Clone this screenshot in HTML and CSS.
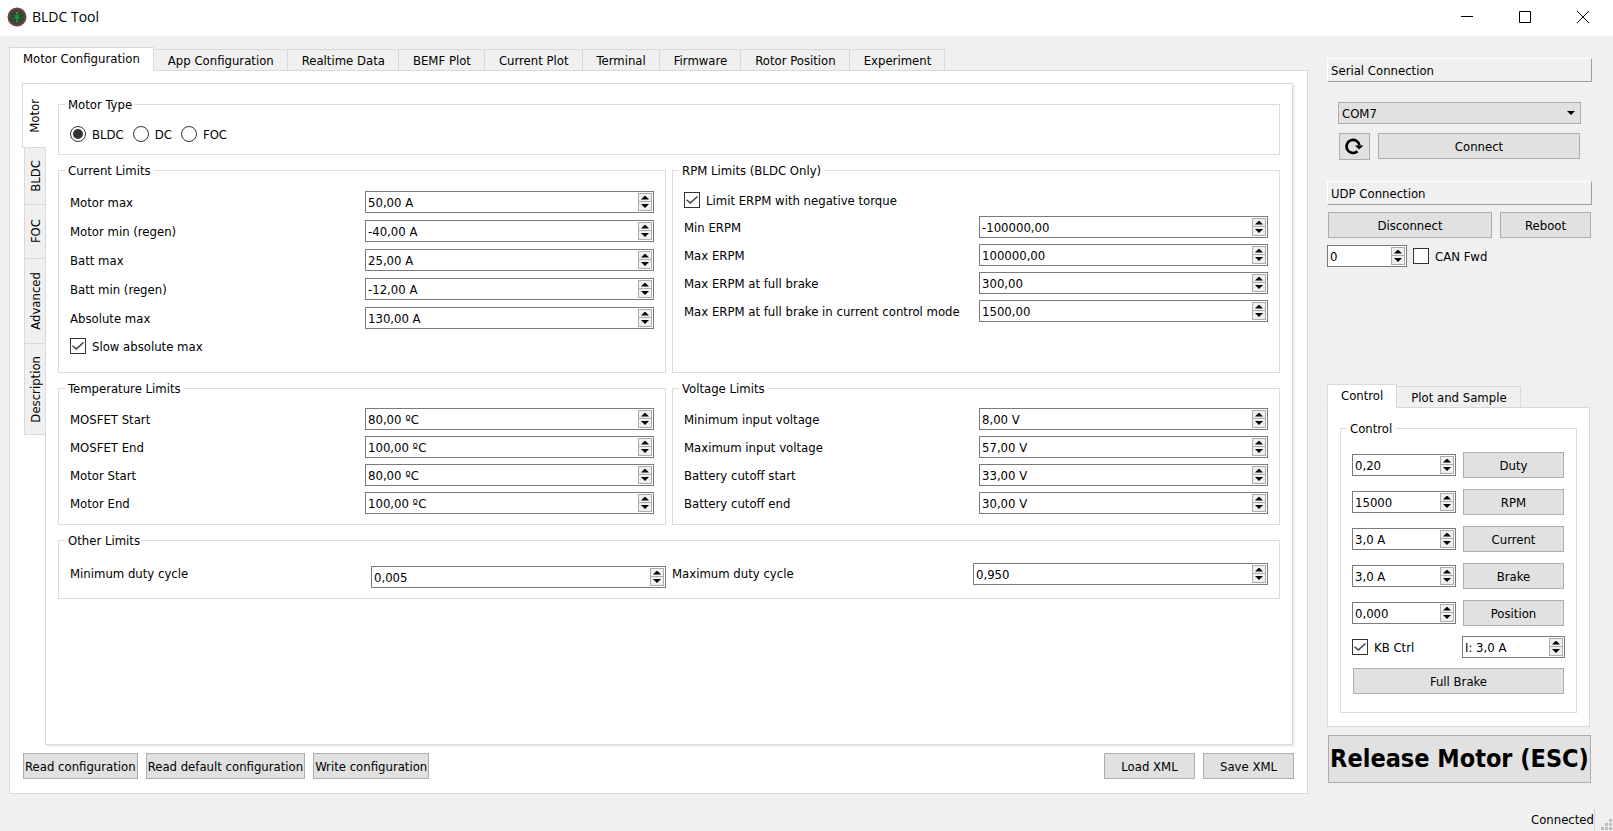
FILE: index.html
```
<!doctype html>
<html lang="en">
<head>
    <meta charset="UTF-8">
    <meta name="viewport" content="width=device-width, initial-scale=1.0">
    <title>BLDC Tool</title>
    <link rel="stylesheet" href="styles.css">
</head>
<body>
    <header class="titlebar">
        <svg class="titlebar__icon" width="20" height="20" viewBox="0 0 20 20">
            <circle cx="10" cy="10" r="8.500" fill="#2b4a30" stroke="#6e4448" stroke-width="2"/>
            <circle cx="10" cy="10" r="6" fill="none" stroke="#3f5f3c" stroke-width="1" stroke-dasharray="2 1"/>
            <path d="M10 5v10M7 8l6 4M13 8l-6 4" stroke="#2f7d3a" stroke-width="1"/>
            <circle cx="10" cy="10" r="2" fill="#1f8f45"/>
            <path d="M10 5v2M10 13v2" stroke="#8a6a2a" stroke-width="2"/>
        </svg>
        <h1 class="titlebar__name">BLDC Tool</h1>
        <div class="titlebar__controls">
            <button class="win-btn" aria-label="Minimize"><svg width="12" height="12" viewBox="0 0 12 12"><path d="M0 5.500h12" stroke="#000"/></svg></button>
            <button class="win-btn" aria-label="Maximize"><svg width="12" height="12" viewBox="0 0 12 12"><path d="M.5.5h11v11H.5z" fill="none" stroke="#000"/></svg></button>
            <button class="win-btn" aria-label="Close"><svg width="12" height="12" viewBox="0 0 12 12"><path d="M0 0l12 12M12 0L0 12" stroke="#000"/></svg></button>
        </div>
    </header>

    <main class="window">
        <section class="main">
            <nav class="tabs">
                <button class="tab active">Motor Configuration</button>
                <button class="tab">App Configuration</button>
                <button class="tab">Realtime Data</button>
                <button class="tab">BEMF Plot</button>
                <button class="tab">Current Plot</button>
                <button class="tab">Terminal</button>
                <button class="tab">Firmware</button>
                <button class="tab">Rotor Position</button>
                <button class="tab">Experiment</button>
            </nav>
            <div class="pane main__pane">
                <div class="config">
                    <nav class="side-tabs">
                        <button class="side-tab side-tab_motor active"><span>Motor</span></button>
                        <button class="side-tab side-tab_bldc"><span>BLDC</span></button>
                        <button class="side-tab side-tab_foc"><span>FOC</span></button>
                        <button class="side-tab side-tab_advanced"><span>Advanced</span></button>
                        <button class="side-tab side-tab_description"><span>Description</span></button>
                    </nav>
                    <form class="config__pane">
                        <fieldset class="group group_type">
                            <legend>Motor Type</legend>
                            <label class="check"><input type="radio" name="type" checked>BLDC</label>
                            <label class="check"><input type="radio" name="type">DC</label>
                            <label class="check"><input type="radio" name="type">FOC</label>
                        </fieldset>
                        <fieldset class="group group_current">
                            <legend>Current Limits</legend>
                            <label for="motor-max">Motor max</label>
                            <div class="spin"><input type="text" id="motor-max" value="50,00 A"><button type="button" class="up" aria-label="Up"></button><button type="button" class="down" aria-label="Down"></button></div>
                            <label for="motor-min">Motor min (regen)</label>
                            <div class="spin"><input type="text" id="motor-min" value="-40,00 A"><button type="button" class="up" aria-label="Up"></button><button type="button" class="down" aria-label="Down"></button></div>
                            <label for="batt-max">Batt max</label>
                            <div class="spin"><input type="text" id="batt-max" value="25,00 A"><button type="button" class="up" aria-label="Up"></button><button type="button" class="down" aria-label="Down"></button></div>
                            <label for="batt-min">Batt min (regen)</label>
                            <div class="spin"><input type="text" id="batt-min" value="-12,00 A"><button type="button" class="up" aria-label="Up"></button><button type="button" class="down" aria-label="Down"></button></div>
                            <label for="abs-max">Absolute max</label>
                            <div class="spin"><input type="text" id="abs-max" value="130,00 A"><button type="button" class="up" aria-label="Up"></button><button type="button" class="down" aria-label="Down"></button></div>
                            <label class="check check_wide"><input type="checkbox" checked>Slow absolute max</label>
                        </fieldset>
                        <fieldset class="group group_rpm">
                            <legend>RPM Limits (BLDC Only)</legend>
                            <label class="check check_wide"><input type="checkbox" checked>Limit ERPM with negative torque</label>
                            <label for="erpm-min">Min ERPM</label>
                            <div class="spin"><input type="text" id="erpm-min" value="-100000,00"><button type="button" class="up" aria-label="Up"></button><button type="button" class="down" aria-label="Down"></button></div>
                            <label for="erpm-max">Max ERPM</label>
                            <div class="spin"><input type="text" id="erpm-max" value="100000,00"><button type="button" class="up" aria-label="Up"></button><button type="button" class="down" aria-label="Down"></button></div>
                            <label for="erpm-fb">Max ERPM at full brake</label>
                            <div class="spin"><input type="text" id="erpm-fb" value="300,00"><button type="button" class="up" aria-label="Up"></button><button type="button" class="down" aria-label="Down"></button></div>
                            <label for="erpm-fbcc">Max ERPM at full brake in current control mode</label>
                            <div class="spin"><input type="text" id="erpm-fbcc" value="1500,00"><button type="button" class="up" aria-label="Up"></button><button type="button" class="down" aria-label="Down"></button></div>
                        </fieldset>
                        <fieldset class="group group_temp">
                            <legend>Temperature Limits</legend>
                            <label for="fet-start">MOSFET Start</label>
                            <div class="spin"><input type="text" id="fet-start" value="80,00 ºC"><button type="button" class="up" aria-label="Up"></button><button type="button" class="down" aria-label="Down"></button></div>
                            <label for="fet-end">MOSFET End</label>
                            <div class="spin"><input type="text" id="fet-end" value="100,00 ºC"><button type="button" class="up" aria-label="Up"></button><button type="button" class="down" aria-label="Down"></button></div>
                            <label for="temp-start">Motor Start</label>
                            <div class="spin"><input type="text" id="temp-start" value="80,00 ºC"><button type="button" class="up" aria-label="Up"></button><button type="button" class="down" aria-label="Down"></button></div>
                            <label for="temp-end">Motor End</label>
                            <div class="spin"><input type="text" id="temp-end" value="100,00 ºC"><button type="button" class="up" aria-label="Up"></button><button type="button" class="down" aria-label="Down"></button></div>
                        </fieldset>
                        <fieldset class="group group_volt">
                            <legend>Voltage Limits</legend>
                            <label for="vin-min">Minimum input voltage</label>
                            <div class="spin"><input type="text" id="vin-min" value="8,00 V"><button type="button" class="up" aria-label="Up"></button><button type="button" class="down" aria-label="Down"></button></div>
                            <label for="vin-max">Maximum input voltage</label>
                            <div class="spin"><input type="text" id="vin-max" value="57,00 V"><button type="button" class="up" aria-label="Up"></button><button type="button" class="down" aria-label="Down"></button></div>
                            <label for="cut-start">Battery cutoff start</label>
                            <div class="spin"><input type="text" id="cut-start" value="33,00 V"><button type="button" class="up" aria-label="Up"></button><button type="button" class="down" aria-label="Down"></button></div>
                            <label for="cut-end">Battery cutoff end</label>
                            <div class="spin"><input type="text" id="cut-end" value="30,00 V"><button type="button" class="up" aria-label="Up"></button><button type="button" class="down" aria-label="Down"></button></div>
                        </fieldset>
                        <fieldset class="group group_other">
                            <legend>Other Limits</legend>
                            <label for="duty-min">Minimum duty cycle</label>
                            <div class="spin spin_low"><input type="text" id="duty-min" value="0,005"><button type="button" class="up" aria-label="Up"></button><button type="button" class="down" aria-label="Down"></button></div>
                            <label for="duty-max">Maximum duty cycle</label>
                            <div class="spin"><input type="text" id="duty-max" value="0,950"><button type="button" class="up" aria-label="Up"></button><button type="button" class="down" aria-label="Down"></button></div>
                        </fieldset>
                    </form>
                </div>
                <div class="actions">
                    <button class="btn">Read configuration</button>
                    <button class="btn">Read default configuration</button>
                    <button class="btn">Write configuration</button>
                    <button class="btn btn_xml btn_first">Load XML</button>
                    <button class="btn btn_xml">Save XML</button>
                </div>
            </div>
        </section>

        <aside class="side">
            <h2 class="side__title">Serial Connection</h2>
            <div class="serial">
                <div class="serial__port">
                    <select aria-label="Port"><option>COM7</option></select>
                </div>
                <div class="serial__row">
                    <button class="btn btn_refresh" aria-label="Refresh">
                        <svg width="20" height="18" viewBox="1 1 20 18">
                            <path d="M13.500 14.200A6.500 6.500 0 1 1 15.500 8.500" fill="none" stroke="#000" stroke-width="2.600"/>
                            <path d="M11 8.500h8.500l-4.500 4z"/>
                        </svg>
                    </button>
                    <button class="btn btn_connect">Connect</button>
                </div>
            </div>
            <h2 class="side__title">UDP Connection</h2>
            <div class="udp">
                <button class="btn btn_disconnect">Disconnect</button>
                <button class="btn btn_reboot">Reboot</button>
            </div>
            <div class="can">
                <div class="spin can__id"><input type="text" aria-label="CAN id" value="0"><button type="button" class="up" aria-label="Up"></button><button type="button" class="down" aria-label="Down"></button></div>
                <label class="check"><input type="checkbox">CAN Fwd</label>
            </div>

            <nav class="tabs side__tabs">
                <button class="tab active">Control</button>
                <button class="tab">Plot and Sample</button>
            </nav>
            <div class="pane side__pane">
                <fieldset class="group control">
                    <legend>Control</legend>
                    <div class="control__rows">
                        <div class="spin"><input type="text" aria-label="Duty" value="0,20"><button type="button" class="up" aria-label="Up"></button><button type="button" class="down" aria-label="Down"></button></div>
                        <button class="btn">Duty</button>
                        <div class="spin"><input type="text" aria-label="RPM" value="15000"><button type="button" class="up" aria-label="Up"></button><button type="button" class="down" aria-label="Down"></button></div>
                        <button class="btn">RPM</button>
                        <div class="spin"><input type="text" aria-label="Current" value="3,0 A"><button type="button" class="up" aria-label="Up"></button><button type="button" class="down" aria-label="Down"></button></div>
                        <button class="btn">Current</button>
                        <div class="spin"><input type="text" aria-label="Brake" value="3,0 A"><button type="button" class="up" aria-label="Up"></button><button type="button" class="down" aria-label="Down"></button></div>
                        <button class="btn">Brake</button>
                        <div class="spin"><input type="text" aria-label="Position" value="0,000"><button type="button" class="up" aria-label="Up"></button><button type="button" class="down" aria-label="Down"></button></div>
                        <button class="btn">Position</button>
                    </div>
                    <div class="control__rows control__rows_kb">
                        <label class="check"><input type="checkbox" checked>KB Ctrl</label>
                        <div class="spin"><input type="text" aria-label="Keyboard current" value="I: 3,0 A"><button type="button" class="up" aria-label="Up"></button><button type="button" class="down" aria-label="Down"></button></div>
                        <button class="btn btn_full">Full Brake</button>
                    </div>
                </fieldset>
            </div>
            <button class="btn btn_release">Release Motor (ESC)</button>
        </aside>
    </main>

    <footer class="status">
        <span class="status__text">Connected</span>
        <svg class="status__grip" width="12" height="12" viewBox="0 0 12 12" fill="#bfbfbf">
            <path d="M8 0h3v3H8zM4 4h3v3H4zM8 4h3v3H8zM0 8h3v3H0zM4 8h3v3H4zM8 8h3v3H8z"/>
        </svg>
    </footer>
</body>
</html>
```
FILE: styles.css
```
*,*:before,*:after{
    box-sizing: border-box;
}
body{
    display: flex;
    flex-direction: column;
    min-height: 100vh;
    margin: 0;
    background: #f0f0f0;
    color: #000;
    font-family: 'DejaVu Sans Condensed', 'DejaVu Sans', sans-serif;
    font-size: 13px;
    line-height: 17px;
}
button, input, select{
    margin: 0;
    padding: 0;
    font: inherit;
    color: inherit;
}
h1, h2{
    margin: 0;
    font-weight: normal;
}

/* title bar */
.titlebar{
    display: flex;
    align-items: center;
    height: 36px;
    padding: 0 1px 2px 7px;
    background: #fff;
}
.titlebar__name{
    margin-left: 5px;
    font-family: 'Open Sans', sans-serif;
    font-size: 14px;
    line-height: 20px;
}
.titlebar__controls{
    display: flex;
    margin-left: auto;
}
.win-btn{
    display: flex;
    justify-content: center;
    align-items: center;
    width: 58px;
    height: 34px;
    border: 0;
    background: none;
}

.window{
    display: grid;
    grid-template-columns: 1fr 265px;
    gap: 19px;
    flex: 1;
    padding: 11px 21px 0 9px;
}
.main{
    display: flex;
    flex-direction: column;
}

/* tabs */
.tabs{
    display: flex;
    align-items: flex-end;
    height: 24px;
    margin-bottom: -1px;
}
.tab{
    height: 22px;
    padding: 0 13px 0 14px;
    border: 1px solid #d9d9d9;
    border-left: 0;
    background: #f0f0f0;
    white-space: nowrap;
}
.tab.active{
    height: 24px;
    padding: 0 13px 1px;
    border-left: 1px solid #d9d9d9;
    border-bottom-color: #fff;
    background: #fff;
    z-index: 1;
}
.pane{
    border: 1px solid #d9d9d9;
    background: #fff;
}
.main__pane{
    display: flex;
    flex-direction: column;
    flex: 1;
    padding: 12px;
}
.config{
    display: flex;
    flex: 1;
}
.side-tabs{
    display: flex;
    flex-direction: column;
    align-items: flex-end;
    width: 24px;
    margin-right: -1px;
}
.side-tab{
    display: flex;
    justify-content: center;
    align-items: center;
    width: 22px;
    border: 1px solid #d9d9d9;
    border-top: 0;
    background: #f0f0f0;
}
.side-tab span{
    writing-mode: vertical-rl;
    transform: rotate(180deg);
}
.side-tab.active{
    width: 24px;
    border-top: 1px solid #d9d9d9;
    border-right-color: #fff;
    background: #fff;
    z-index: 1;
}
.side-tab_motor{
    height: 65px;
}
.side-tab_bldc{
    height: 57px;
}
.side-tab_foc{
    height: 54px;
}
.side-tab_advanced{
    height: 85px;
}
.side-tab_description{
    height: 91px;
}
.config__pane{
    display: grid;
    grid-template-columns: 1fr 1fr;
    align-content: start;
    gap: 7px 6px;
    flex: 1;
    margin-right: 2px;
    padding: 12px;
    border: 1px solid #d9d9d9;
    box-shadow: 2px 2px 0 #f0f0f0;
}

/* groups */
.group{
    min-width: 0;
    margin: 0;
    padding: 11px 11px 10px;
    border: 1px solid #dcdcdc;
}
.group legend{
    margin-left: -5px;
    padding: 0 3px;
    height: 17px;
}
.group_type, .group_other{
    grid-column: 1 / -1;
}
.group_type{
    display: flex;
    gap: 9px;
}
.group_current, .group_rpm, .group_temp, .group_volt{
    display: grid;
    grid-template-columns: 1fr 1fr;
    align-content: start;
    align-items: center;
    gap: 6px;
    white-space: nowrap;
}
.group_current{
    row-gap: 7px;
    padding-top: 12px;
    padding-bottom: 16px;
}
.group_other{
    display: grid;
    grid-template-columns: repeat(4, 1fr);
    grid-template-rows: 25px;
    align-items: start;
    gap: 6px;
    padding-top: 14px;
    line-height: 22px;
}
.group_other legend{
    line-height: 17px;
}
.check{
    display: flex;
    align-items: center;
    height: 20px;
}
.check_wide{
    grid-column: 1 / -1;
}
.check input{
    appearance: none;
    position: relative;
    width: 16px;
    height: 16px;
    margin-right: 6px;
    border: 1px solid #333;
    background: #fff;
}
.check input[type=radio]{
    border-radius: 50%;
}
.check input[type=radio]:checked:before{
    content: '';
    position: absolute;
    inset: 2px;
    border-radius: 50%;
    background: #333;
}
/* tick */
.check input[type=checkbox]:checked:before{
    content: '';
    position: absolute;
    inset: 2px 1px;
    background: #444;
    clip-path: polygon(0 52%, 8% 43%, 36% 70%, 91% 10%, 100% 20%, 36% 90%);
}

/* spin box */
.spin{
    display: grid;
    grid-template-columns: 1fr 14px;
    grid-template-rows: 9px 9px;
    height: 22px;
    padding: 1px;
    border: 1px solid #7a7a7a;
    background: #fff;
}
.spin input{
    grid-row: 1 / 3;
    width: 100%;
    min-width: 0;
    padding-left: 1px;
    border: 0;
    outline: 0;
    background: none;
    line-height: 17px;
}
.spin button{
    display: flex;
    justify-content: center;
    align-items: center;
    grid-column: 2;
    border: 1px solid #adadad;
    background: #f0f0f0;
}
.spin .down{
    border-top: 0;
}
.spin button:before{
    content: '';
    width: 8px;
    height: 4px;
    background: #000;
    clip-path: polygon(50% 0, 100% 100%, 0 100%);
}
.spin .down:before{
    clip-path: polygon(0 0, 100% 0, 50% 100%);
}
.spin_low{
    align-self: end;
}

/* buttons */
.btn{
    height: 26px;
    border: 1px solid #adadad;
    background: #e1e1e1;
    white-space: nowrap;
}
.actions{
    display: flex;
    gap: 8px;
    margin-top: 8px;
    padding: 0 1px 2px;
}
.actions .btn{
    padding: 0 1px;
}
.actions .btn_xml{
    width: 91px;
}
.btn_first{
    margin-left: auto;
}

/* right side */
.side{
    display: flex;
    flex-direction: column;
    padding: 11px 0;
}
.side__title{
    height: 24px;
    padding: 3px;
    border: 1px solid #fff;
    border-right-color: #a0a0a0;
    border-bottom-color: #a0a0a0;
    font-size: 13px;
    line-height: 17px;
}
.serial{
    padding: 20px 11px 21px;
}
.serial__port{
    position: relative;
}
.serial__port select{
    display: block;
    appearance: none;
    width: 100%;
    height: 22px;
    padding-left: 3px;
    border: 1px solid #adadad;
    border-radius: 0;
    background: #e1e1e1;
}
.serial__port:after{
    content: '';
    position: absolute;
    right: 6px;
    top: 9px;
    width: 8px;
    height: 4px;
    background: #000;
    clip-path: polygon(0 0, 100% 0, 50% 100%);
    pointer-events: none;
}
.serial__row{
    display: flex;
    gap: 8px;
    margin-top: 9px;
    padding: 0 1px;
}
.btn_refresh{
    display: flex;
    justify-content: center;
    align-items: center;
    width: 31px;
    height: 27px;
}
.btn_connect{
    flex: 1;
}
.udp{
    display: flex;
    gap: 8px;
    padding: 7px 1px;
}
.btn_disconnect{
    flex: 1;
}
.btn_reboot{
    width: 91px;
}
.can{
    display: flex;
    align-items: center;
    gap: 6px;
}
.can__id{
    width: 80px;
}
.side__tabs{
    margin-top: auto;
}
.side__pane{
    margin-right: 2px;
    padding: 12px 12px 13px;
}
.control{
    padding: 15px 11px 18px;
}
.control__rows{
    display: grid;
    grid-template-columns: 104px 1fr;
    align-items: center;
    gap: 11px 6px;
}
.control__rows_kb{
    row-gap: 10px;
    margin-top: 10px;
}
.control .btn{
    margin: 0 1px;
}
.control .btn_full{
    grid-column: 1 / -1;
}
.side .btn_release{
    height: 48px;
    margin: 8px 1px 0;
    font-size: 25px;
    font-weight: bold;
    line-height: 32px;
}

/* status bar */
.status{
    display: flex;
    justify-content: flex-end;
    align-items: flex-end;
    height: 37px;
}
.status__text{
    margin-right: 6px;
    padding: 2px 0 3px;
    border-right: 1px solid #d9d9d9;
}
```
